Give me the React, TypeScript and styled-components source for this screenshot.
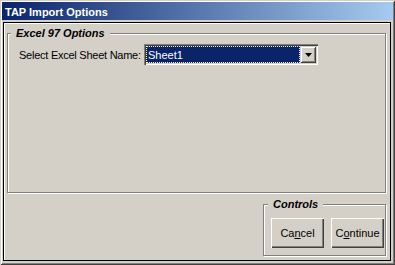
import styled, { createGlobalStyle } from "styled-components";

const GlobalStyle = createGlobalStyle`
  html, body {
    margin: 0;
    padding: 0;
    background: #d4d0c8;
  }
  * {
    box-sizing: border-box;
  }
`;

const Window = styled.div`
  width: 395px;
  height: 265px;
  display: flex;
  flex-direction: column;
  padding: 2px 2px 3px 2px;
  background: #d4d0c8;
  box-shadow: inset 1px 1px #d4d0c8, inset -1px -1px #404040,
    inset 2px 2px #fff, inset -2px -2px #808080;
  font-family: "Liberation Sans", Arial, sans-serif;
  font-size: 11px;
  color: #000;
`;

const TitleBar = styled.div`
  flex: none;
  height: 18px;
  display: flex;
  align-items: center;
  padding: 1px 0 0 3px;
  background: linear-gradient(to right, #0a246a, #a6caf0);
  color: #fff;
  font-weight: bold;
  font-size: 11px;
`;

const Client = styled.div`
  flex: 1;
  display: flex;
  flex-direction: column;
  margin: 2px 2px 1px 1px;
  padding: 4px 4px 4px 3px;
  border: 1px solid #000;
  box-shadow: inset 1px 1px #fff;
`;

const GroupBox = styled.fieldset<{ $grow?: boolean }>`
  flex: ${(p) => (p.$grow ? "1" : "none")};
  min-width: 0;
  margin: 0;
  padding: 0;
  border: 1px solid #808080;
  box-shadow: inset 1px 1px #fff, 1px 1px #fff;
`;

const Legend = styled.legend<{ $offset: number }>`
  margin-left: ${(p) => p.$offset}px;
  padding: 0 5px;
  line-height: 13px;
  font-weight: bold;
  font-style: italic;
  background: #d4d0c8;
`;

const SheetRow = styled.div`
  display: flex;
  align-items: center;
  padding: 4px 0 0 11px;
`;

const Label = styled.label`
  flex: none;
  width: 125px;
  white-space: nowrap;
  letter-spacing: -0.25px;
  padding-top: 1px;
`;

const Combo = styled.div`
  width: 174px;
  height: 21px;
  display: flex;
  padding: 2px;
  background: #fff;
  box-shadow: inset 1px 1px #808080, inset 2px 2px #404040,
    inset -1px -1px #fff, inset -2px -2px #d4d0c8;
`;

const Selection = styled.div`
  flex: 1;
  display: flex;
  align-items: center;
  padding-left: 1px;
  background: #0a246a;
  border: 1px dotted #fff7c0;
  color: #fff;
`;

const DropButton = styled.div`
  width: 16px;
  display: flex;
  align-items: center;
  justify-content: center;
  background: #d4d0c8;
  box-shadow: inset 1px 1px #d4d0c8, inset -1px -1px #404040,
    inset 2px 2px #fff, inset -2px -2px #808080;
`;

const Footer = styled.div`
  flex: none;
  display: flex;
  justify-content: flex-end;
  margin-top: 5px;
`;

const ControlsBox = styled(GroupBox)`
  width: 123px;
  height: 58px;
`;

const ButtonRow = styled.div`
  display: flex;
  gap: 7px;
  padding: 7px 1px 0 7px;
`;

const Button = styled.button`
  width: 53px;
  height: 30px;
  padding: 0;
  border: none;
  background: #d4d0c8;
  box-shadow: inset 1px 1px #fff, inset -1px -1px #404040,
    inset -2px -2px #808080;
  font-family: "Liberation Sans", Arial, sans-serif;
  font-size: 11px;
  color: #000;
`;

const Arrow = () => (
  <svg width="7" height="4" viewBox="0 0 7 4">
    <polygon points="0,0 7,0 3.5,4" fill="#000" />
  </svg>
);

export default function App() {
  return (
    <>
      <GlobalStyle />
      <Window>
        <TitleBar>TAP Import Options</TitleBar>
        <Client>
          <GroupBox $grow>
            <Legend $offset={3}>Excel 97 Options</Legend>
            <SheetRow>
              <Label>Select Excel Sheet Name:</Label>
              <Combo>
                <Selection>Sheet1</Selection>
                <DropButton>
                  <Arrow />
                </DropButton>
              </Combo>
            </SheetRow>
          </GroupBox>
          <Footer>
            <ControlsBox>
              <Legend $offset={4}>Controls</Legend>
              <ButtonRow>
                <Button>
                  Ca<u>n</u>cel
                </Button>
                <Button>
                  C<u>o</u>ntinue
                </Button>
              </ButtonRow>
            </ControlsBox>
          </Footer>
        </Client>
      </Window>
    </>
  );
}
